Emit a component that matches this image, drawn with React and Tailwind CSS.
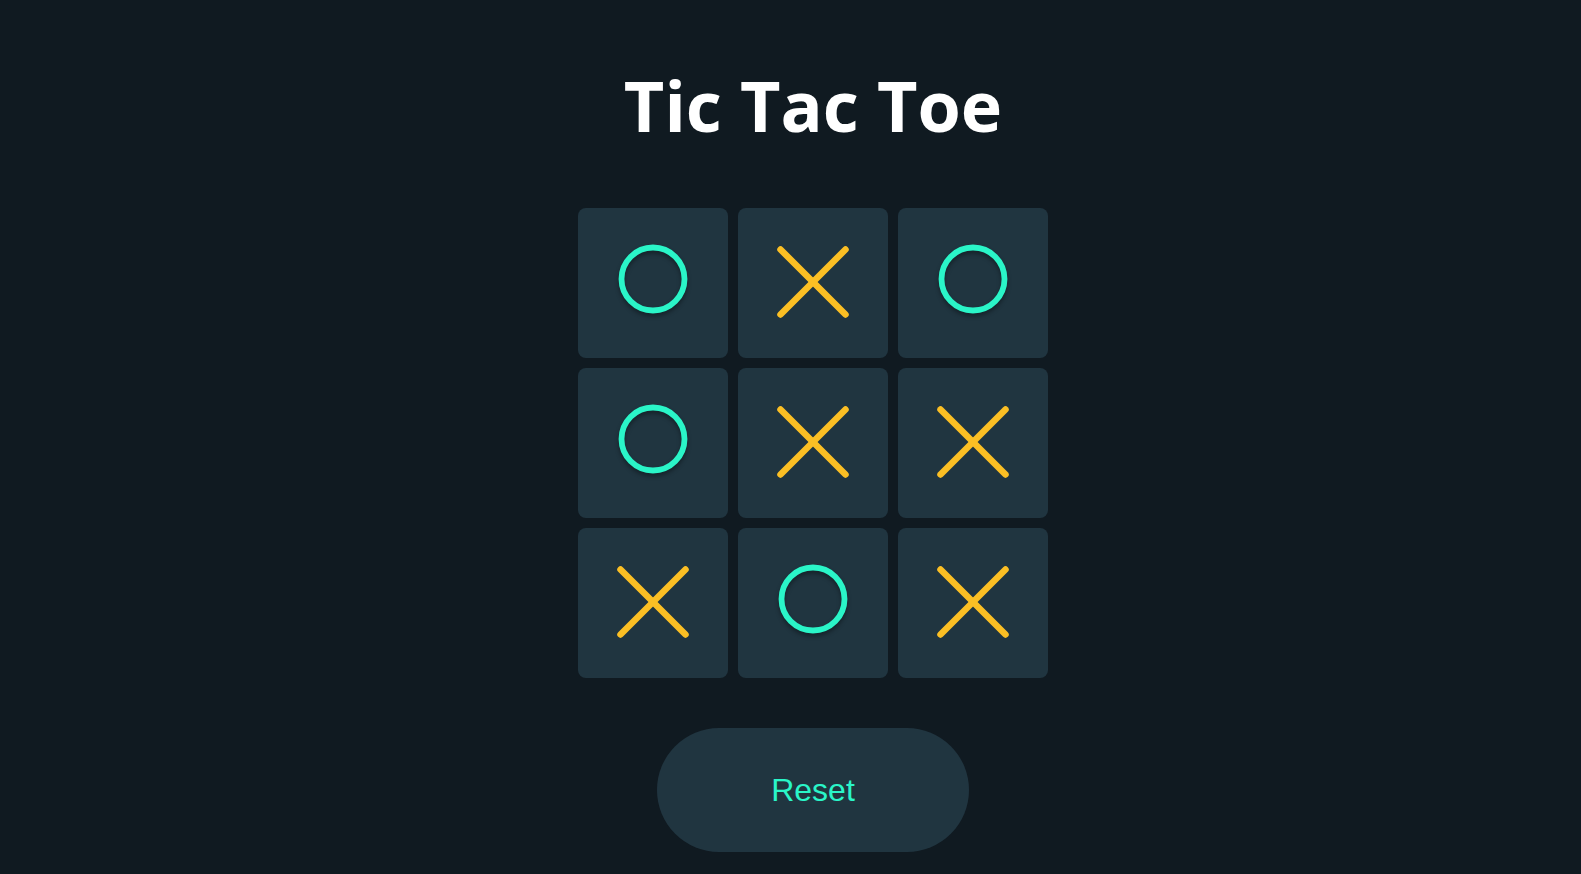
import { useState } from "react";

const START = ["O", "X", "O", "O", "X", "X", "X", "O", "X"];

function Mark({ value }) {
  if (value === "X") {
    return (
      <svg width="80" height="80" viewBox="0 0 80 80" className="translate-y-[-1px]">
        <line x1="7.5" y1="7.5" x2="72.5" y2="72.5" stroke="#fbbf24" strokeWidth="6.5" strokeLinecap="round" />
        <line x1="72.5" y1="7.5" x2="7.5" y2="72.5" stroke="#fbbf24" strokeWidth="6.5" strokeLinecap="round" />
      </svg>
    );
  }
  if (value === "O") {
    return (
      <svg
        width="80"
        height="80"
        viewBox="0 0 80 80"
        className="translate-y-[-4px] drop-shadow-[0_3px_2px_rgba(0,0,0,0.35)]"
      >
        <circle cx="40" cy="40" r="31.5" fill="none" stroke="#2af5c8" strokeWidth="5.8" />
      </svg>
    );
  }
  return null;
}

export default function App() {
  const [board, setBoard] = useState(START);

  function reset() {
    setBoard(Array(9).fill(null));
  }

  return (
    <div className="min-h-screen bg-[#101a21] pl-[45px] pt-[70px] flex flex-col items-center">
      <h1 className="text-[70px] leading-none font-bold text-white font-['Open_Sans',sans-serif]">
        Tic Tac Toe
      </h1>

      <div className="mt-[68px] grid grid-cols-3 gap-[10px]">
        {board.map((value, i) => (
          <div
            key={i}
            className="w-[150px] h-[150px] rounded-lg bg-[#203540] flex items-center justify-center"
          >
            <Mark value={value} />
          </div>
        ))}
      </div>

      <button
        type="button"
        onClick={reset}
        className="mt-[50px] w-[312px] h-[124px] rounded-full bg-[#203540] text-[32px] text-[#2af5c8] font-['Liberation_Sans',Arial,sans-serif]"
      >
        Reset
      </button>
    </div>
  );
}
